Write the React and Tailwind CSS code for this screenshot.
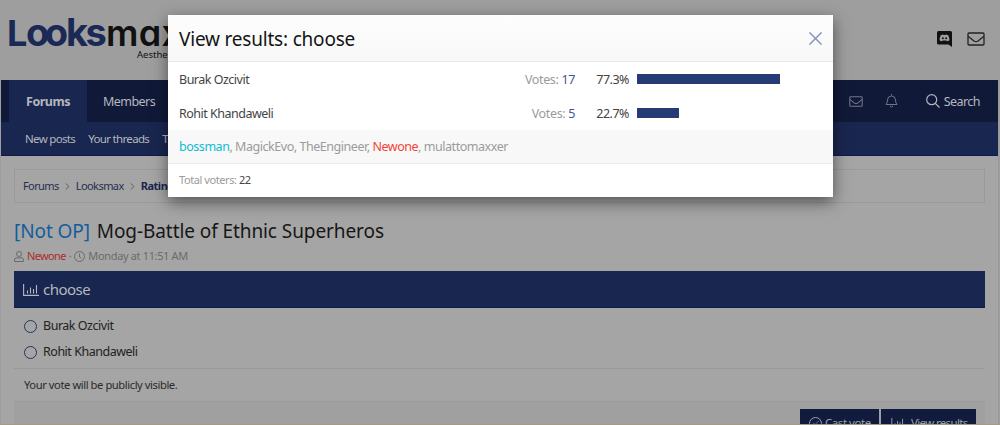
import { Check, ChevronRight } from 'lucide-react'

const results = [
  { name: 'Burak Ozcivit', votes: 17, percent: '77.3%', width: 143 },
  { name: 'Rohit Khandaweli', votes: 5, percent: '22.7%', width: 42 },
]

function Envelope({ className }) {
  return (
    <svg className={className} viewBox="0 0 18 14" fill="none" stroke="currentColor" strokeWidth="1.3">
      <rect x="1" y="1" width="16" height="12" rx="1" />
      <path d="M1 4.2 L7 9 Q9 10.3 11 9 L17 4.2" />
    </svg>
  )
}

function Chart({ className }) {
  return (
    <svg className={className} viewBox="0 0 16 12" fill="none" stroke="currentColor" strokeWidth="1.1">
      <path d="M0.6 0 V11.4 H16 M4.5 6.5 V9.5 M7.5 3.5 V9.5 M10.5 5 V9.5 M13.5 1 V9.5" />
    </svg>
  )
}

function Discord() {
  return (
    <svg className="h-4 w-[15px]" viewBox="0 0 15 16">
      <path d="M1.5 0 H13.5 Q15 0 15 1.5 V16 L11.5 13.5 H1.5 Q0 13.5 0 12 V1.5 Q0 0 1.5 0 Z" fill="#111" />
      <path d="M3.8 4.2 Q5 3.4 6.2 3.4 L6.5 3.9 H8.5 L8.8 3.4 Q10 3.4 11.2 4.2 Q12.5 6.5 12.4 9.2 Q11.3 10.2 10 10.3 L9.3 9.5 H5.7 L5 10.3 Q3.7 10.2 2.6 9.2 Q2.5 6.5 3.8 4.2 Z" fill="#9e9e9e" />
      <circle cx="5.9" cy="7.2" r="1" fill="#111" />
      <circle cx="9.1" cy="7.2" r="1" fill="#111" />
    </svg>
  )
}

function Header() {
  return (
    <header className="flex h-20 items-start justify-between bg-[#9e9e9e] pl-[7px] pr-[15px]">
      <div className="w-[190px] pt-[14px]">
        <div className="flex h-9 items-baseline whitespace-nowrap font-['Inter'] text-[39px] font-bold leading-9 text-[#1a2956] [font-feature-settings:'cv11']">
          <span className="w-[19px] text-[36px]">L</span>
          <span className="w-[40px] text-[38px] tracking-[-4.5px]">oo</span>
          <span className="w-[40px] text-[38px] tracking-[-2.5px]">ks</span>
          <span className="text-[36px] font-semibold tracking-[0.3px] text-[#111]">max</span>
        </div>
        <div className="pl-[130px] font-['Noto_Sans'] text-[9.5px] leading-[9px] text-[#111]">Aesthe</div>
      </div>
      <div className="flex items-center gap-[15px] pt-[31px] text-[#222]">
        <Discord />
        <Envelope className="h-[14px] w-[18px]" />
      </div>
    </header>
  )
}

function Nav() {
  return (
    <nav className="border-b border-[#0f1a4d] text-[#b5b7be]">
      <div className="flex h-[42px] items-center justify-between bg-[#101a38] pl-2 pr-[18px]">
        <div className="flex h-full items-center">
          <span className="flex h-full w-[78px] items-center justify-center bg-[#19264f] pt-[2px] text-[12.5px] font-bold tracking-[-0.5px]">Forums</span>
          <span className="pl-4 pt-[2px] text-[12.5px] tracking-[-0.55px]">Members</span>
        </div>
        <div className="flex items-center text-[#6f758a]">
          <Envelope className="mr-[22px] h-[11px] w-[14px]" />
          <svg className="mr-[28px] h-[14px] w-[13px]" viewBox="0 0 13 14" fill="none" stroke="currentColor">
            <path d="M6.5 0 V1.5 M1 10.5 Q2.5 9 2.5 6 Q2.5 2 6.5 2 Q10.5 2 10.5 6 Q10.5 9 12 10.5 Z M5 12 Q6.5 14 8 12" />
          </svg>
          <svg className="mr-1 h-[14px] w-[14px] text-[#b5b7be]" viewBox="0 0 14 14" fill="none" stroke="currentColor" strokeWidth="1.2">
            <circle cx="5.7" cy="5.7" r="5" />
            <path d="M9.3 9.3 L13.5 13.5" />
          </svg>
          <span className="pt-[2px] text-[12.5px] tracking-[-0.55px] text-[#b5b7be]">Search</span>
        </div>
      </div>
      <div className="flex h-[33px] items-center gap-[13px] bg-[#19264f] pl-6 pt-px text-[11.5px] tracking-[-0.67px]">
        <span>New posts</span>
        <span>Your threads</span>
        <span>Tr</span>
      </div>
    </nav>
  )
}

function Breadcrumbs() {
  return (
    <div className="mt-[13px] flex h-[34px] items-center border border-[#999] pl-2 text-[11px] text-[#26304e]">
      <span className="tracking-[-0.6px]">Forums</span>
      <ChevronRight className="mx-[3px] size-[11px] text-[#555]" strokeWidth={2} />
      <span className="tracking-[-0.55px]">Looksmax</span>
      <ChevronRight className="mx-[3px] size-[11px] text-[#555]" strokeWidth={2} />
      <span className="font-bold tracking-[-0.5px] text-[#19264f]">Rating</span>
    </div>
  )
}

function ThreadTitle() {
  return (
    <div className="pt-4">
      <h1 className="whitespace-pre text-[19px] leading-6 tracking-[-0.08px] text-[#161616]">
        <span className="mr-[2px] text-[#145d9c]">[Not OP]</span> Mog-Battle of Ethnic Superheros
      </h1>
      <div className="mt-[5px] flex h-4 items-center text-[11px] tracking-[-0.35px] text-[#6b6b6b]">
        <svg className="mr-[3px] h-[11px] w-[10px]" viewBox="0 0 10 11" fill="none" stroke="currentColor">
          <circle cx="5" cy="3" r="2.5" />
          <path d="M0.5 10.5 V9 Q0.5 6.7 3 6.7 Q5 7.5 7 6.7 Q9.5 6.7 9.5 9 V10.5 Z" />
        </svg>
        <span className="tracking-[-0.65px] text-[#aa2d2b]">Newone</span>
        <span className="mx-[3px]">·</span>
        <svg className="mr-[3px] h-[11px] w-[11px]" viewBox="0 0 11 11" fill="none" stroke="currentColor">
          <circle cx="5.5" cy="5.5" r="5" />
          <path d="M5.5 2.5 V6 L7.5 7.3" />
        </svg>
        <span>Monday at 11:51 AM</span>
      </div>
    </div>
  )
}

function Poll() {
  return (
    <section className="mt-[7px]">
      <h2 className="flex h-[37px] items-center border-b border-[#0f1a4d] bg-[#19264f] pl-[9px] pt-px text-[#b5b7be]">
        <Chart className="mr-1 h-3 w-4" />
        <span className="text-[15px] tracking-[-0.5px]">choose</span>
      </h2>
      <div className="flex h-[61px] flex-col gap-[6px] border-b border-[#999] pl-[10px] pt-[8px]">
        {results.map((choice) => (
          <label key={choice.name} className="flex h-5 items-center gap-[6px] text-[12.5px] tracking-[-0.48px] text-[#222]">
            <span className="size-[13px] rounded-full border border-[#26345f]" />
            {choice.name}
          </label>
        ))}
      </div>
      <div className="flex h-[33px] items-center border-b border-[#999] pl-[10px] pt-px text-[11.2px] tracking-[-0.43px] text-[#2a2a2a]">
        Your vote will be publicly visible.
      </div>
      <div className="flex h-[60px] justify-end gap-[2px] bg-[#a0a0a0] pr-[9px] pt-[7px] text-[11.5px] text-[#9da0ac]">
        <span className="flex h-7 w-[79px] items-center gap-[3px] bg-[#101b3d] pl-[9px] tracking-[-0.45px]">
          <span className="flex size-[13px] shrink-0 items-center justify-center rounded-full border border-current">
            <Check className="size-2" />
          </span>
          Cast vote
        </span>
        <span className="flex h-7 w-[95px] items-center gap-[6px] bg-[#101b3d] pl-[10px] tracking-[-0.65px]">
          <Chart className="h-[10px] w-[14px]" />
          View results
        </span>
      </div>
    </section>
  )
}

function ResultsDialog() {
  return (
    <div className="absolute left-[168px] top-[15px] w-[665px] bg-white text-[12.5px] shadow-[0_5px_15px_rgba(0,0,0,0.5)]">
      <div className="flex h-[47px] items-center justify-between border-b border-[#e8e8e8] bg-linear-to-b from-[#fdfdfd] to-[#f8f8f8] pl-[11px] pr-[11px]">
        <h3 className="pt-[2px] text-[19px] tracking-[-0.2px] text-[#141414]">View results: choose</h3>
        <svg className="h-[13px] w-[13px]" viewBox="0 0 12 12" stroke="#8993bb" strokeWidth="1.4">
          <path d="M0.4 0.4 L11.6 11.6 M11.6 0.4 L0.4 11.6" />
        </svg>
      </div>
      {results.map((result) => (
        <div key={result.name} className="flex h-[34px] items-center pl-[11px] text-[#444]">
          <span className="w-[297px] pt-[2px] tracking-[-0.5px]">{result.name}</span>
          <span className="w-[99px] pt-[2px] text-right tracking-[-0.35px] text-[#9b9b9b]">
            Votes: <span className="text-[#465495]">{result.votes}</span>
          </span>
          <span className="w-[54px] pt-[2px] text-right tracking-[-0.5px]">{result.percent}</span>
          <span className="ml-2 h-[10px] bg-[#263b75]" style={{ width: result.width }} />
        </div>
      ))}
      <div className="flex h-[34px] items-center whitespace-pre border-b border-[#ececec] bg-[#f8f8f8] pl-[11px] pt-[2px] tracking-[-0.46px] text-[#9b9b9b]">
        <span className="text-[#10bcd4]">bossman</span>, MagickEvo, TheEngineer, <span className="text-[#f44336]">Newone</span>, mulattomaxxer
      </div>
      <div className="flex h-[33px] items-center whitespace-pre pl-[11px] text-[11px] tracking-[-0.42px] text-[#9b9b9b]">
        Total voters: <span className="text-[#444]">22</span>
      </div>
    </div>
  )
}

function App() {
  return (
    <div className="relative h-[425px] w-[1000px] overflow-hidden bg-[#9e9e9e] font-['Noto_Sans',sans-serif]">
      <Header />
      <main className="ml-px mr-[1px] h-[344px] overflow-hidden border-r border-[#999] bg-[#a5a5a5]">
        <Nav />
        <div className="px-[13px]">
          <Breadcrumbs />
          <ThreadTitle />
          <Poll />
        </div>
      </main>
      <div className="h-px bg-[#a49b87]" />
      <ResultsDialog />
    </div>
  )
}

export default App
